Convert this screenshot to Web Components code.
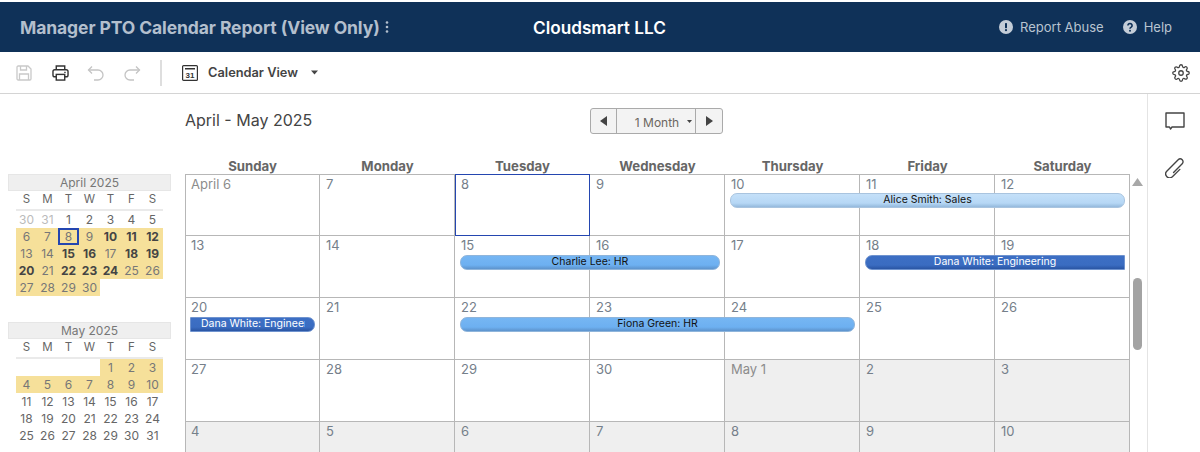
<!DOCTYPE html>
<html lang="en">
<head>
<meta charset="utf-8">
<title>Manager PTO Calendar Report</title>
<style>
  html, body { margin: 0; height: 100%; overflow: hidden; background: #fff; }
  body { font-family: Inter, "Liberation Sans", sans-serif; color: #444; }
</style>
</head>
<body>
<pto-app></pto-app>
<script>
// Barre du haut : titre du rapport, société, liens
class AppHeader extends HTMLElement {
  constructor() {
    super();
    this.attachShadow({ mode: 'open' });
    this.shadowRoot.innerHTML = `
      <style>
        :host { display: block; margin-top: 2px; height: 50px; background: #0f3158; }
        .bar { display: grid; grid-template-columns: 533px 1fr auto; align-items: center; height: 100%; }
        .title { display: flex; align-items: center; padding-left: 20px; font: 700 17.5px Inter, sans-serif; letter-spacing: -.1px; color: #b3bfcd; white-space: nowrap; }
        .title svg { margin-left: 5px; }
        .company { font: 600 17.2px Inter, sans-serif; color: #fff; }
        .links { display: flex; align-items: center; padding-right: 28px; font-size: 13px; color: #b9c4d1; }
        .links span { display: flex; align-items: center; gap: 7px; }
        .links span + span { margin-left: 19px; }
      </style>
      <div class="bar">
        <div class="title">Manager PTO Calendar Report (View Only)
          <svg width="4" height="14" viewBox="0 0 4 14" fill="#b3bfcd"><circle cx="2" cy="2.500" r="1.300"/><circle cx="2" cy="7" r="1.300"/><circle cx="2" cy="11.500" r="1.300"/></svg>
        </div>
        <div class="company">Cloudsmart LLC</div>
        <div class="links">
          <span>
            <svg width="14" height="14" viewBox="0 0 14 14"><circle cx="7" cy="7" r="7" fill="#c4cdd8"/><rect x="6" y="3" width="2" height="5.200" rx=".6" fill="#0f3158"/><circle cx="7" cy="10.200" r="1.100" fill="#0f3158"/></svg>
            Report Abuse
          </span>
          <span>
            <svg width="14" height="14" viewBox="0 0 14 14"><circle cx="7" cy="7" r="7" fill="#c4cdd8"/><path d="M4.900 5.400a2.100 2 0 1 1 3.300 1.700c-.8.5-1.200.9-1.200 1.600" fill="none" stroke="#0f3158" stroke-width="1.600"/><circle cx="7" cy="10.800" r="1" fill="#0f3158"/></svg>
            Help
          </span>
        </div>
      </div>`;
  }
}

// Barre d'outils sous l'en-tête
class ToolBar extends HTMLElement {
  constructor() {
    super();
    this.attachShadow({ mode: 'open' });
    this.shadowRoot.innerHTML = `
      <style>
        :host { display: block; height: 41px; border-bottom: 1px solid #d4d4d4; }
        .bar { display: flex; align-items: center; height: 100%; padding-left: 16px; padding-right: 10px; }
        svg { display: block; flex: none; }
        .sep { width: 2px; height: 26px; background: #dedede; margin: 0 20px 0 19px; }
        .label { margin-left: 10px; font-size: 12.8px; font-weight: 600; color: #444; }
        .end { margin-left: auto; }
      </style>
      <div class="bar">
        <svg width="16" height="16" viewBox="0 0 16 16" fill="none" stroke="#c9c9c9" stroke-width="1.300"><path d="M1 2.200C1 1.500 1.500 1 2.200 1H12l3 3v9.800c0 .7-.5 1.200-1.200 1.200H2.200C1.500 15 1 14.500 1 13.800z"/><path d="M4.500 1v4h6V1M3.500 15V9h9v6"/></svg>
        <svg width="17" height="16" viewBox="0 0 18 17" style="margin-left:20px" fill="none" stroke="#333" stroke-width="1.500"><path d="M4.500 5V1h9v4"/><rect x="1" y="5" width="16" height="7.500" rx="2"/><rect x="4.500" y="10" width="9" height="6" fill="#fff"/><path d="M13 7.800h1.500"/></svg>
        <svg width="18" height="16" viewBox="0 0 18 16" style="margin-left:18px" fill="none" stroke="#c4c4c4" stroke-width="1.300"><path d="M5 1.500 1.500 5 5 8.500"/><path d="M1.500 5H11a5 5 0 0 1 0 10H7"/></svg>
        <svg width="18" height="16" viewBox="0 0 18 16" style="margin-left:18px" fill="none" stroke="#c4c4c4" stroke-width="1.300"><path d="M13 1.500 16.500 5 13 8.500"/><path d="M16.500 5H7a5 5 0 0 0 0 10h4"/></svg>
        <div class="sep"></div>
        <svg width="16" height="16" viewBox="0 0 16 16"><rect x=".6" y=".6" width="14.800" height="14.800" rx="1" fill="none" stroke="#333" stroke-width="1.200"/><rect x="3" y="3" width="10" height="1.500" fill="#333"/><text x="8" y="13" text-anchor="middle" font-family="Liberation Sans" font-size="8" font-weight="700" fill="#333">31</text></svg>
        <span class="label">Calendar View</span>
        <svg width="7" height="5" viewBox="0 0 7 5" style="margin-left:13px"><path d="M0 .5h7L3.500 4.500z" fill="#444"/></svg>
        <svg class="end" width="18" height="18" viewBox="0 0 24 24" fill="none" stroke="#444" stroke-width="1.700" stroke-linejoin="round"><circle cx="12" cy="12" r="3"/><path d="M19.400 15a1.650 1.650 0 0 0 .33 1.820l.06.06a2 2 0 0 1 0 2.830 2 2 0 0 1-2.830 0l-.06-.06a1.650 1.650 0 0 0-1.820-.33 1.650 1.650 0 0 0-1 1.510V21a2 2 0 0 1-2 2 2 2 0 0 1-2-2v-.09A1.650 1.650 0 0 0 9 19.400a1.650 1.650 0 0 0-1.820.33l-.06.06a2 2 0 0 1-2.830 0 2 2 0 0 1 0-2.830l.06-.06a1.650 1.650 0 0 0 .33-1.820 1.650 1.650 0 0 0-1.510-1H3a2 2 0 0 1-2-2 2 2 0 0 1 2-2h.09A1.650 1.650 0 0 0 4.600 9a1.650 1.650 0 0 0-.33-1.820l-.06-.06a2 2 0 0 1 0-2.830 2 2 0 0 1 2.830 0l.06.06a1.650 1.650 0 0 0 1.820.33H9a1.650 1.650 0 0 0 1-1.510V3a2 2 0 0 1 2-2 2 2 0 0 1 2 2v.09a1.650 1.650 0 0 0 1 1.510 1.650 1.650 0 0 0 1.820-.33l.06-.06a2 2 0 0 1 2.830 0 2 2 0 0 1 0 2.830l-.06.06a1.650 1.650 0 0 0-.33 1.820V9a1.650 1.650 0 0 0 1.510 1H21a2 2 0 0 1 2 2 2 2 0 0 1-2 2h-.09a1.650 1.650 0 0 0-1.510 1z"/></svg>
      </div>`;
  }
}

// Petit calendrier de la colonne de gauche
class MiniCal extends HTMLElement {
  connectedCallback() {
    if (this.shadowRoot) return;
    this.attachShadow({ mode: 'open' });
    const first = Number(this.getAttribute('first'));      // premier numéro affiché
    const prevEnd = Number(this.getAttribute('prev-end')); // dernier jour du mois précédent
    const lead = Number(this.getAttribute('lead'));        // cases avant le 1er
    const len = Number(this.getAttribute('len'));
    const off = (this.getAttribute('off') || '').split(',').filter(Boolean).map(Number);
    const busy = (this.getAttribute('busy') || '').split(',').filter(Boolean).map(Number);
    const bold = (this.getAttribute('bold') || '').split(',').filter(Boolean).map(Number);
    const today = Number(this.getAttribute('today') || 0);
    const letters = ['S','M','T','W','T','F','S'].map(l => `<div class="dow">${l}</div>`).join('');
    let cells = '';
    for (let i = 0; i < lead; i++) {
      const shown = off.length ? `<div class="d muted">${prevEnd - lead + 1 + i}</div>` : '<div class="d"></div>';
      cells += shown;
    }
    for (let d = first; d <= len; d++) {
      const cls = ['d'];
      if (busy.includes(d)) cls.push('busy');
      if (bold.includes(d)) cls.push('bold');
      if (d === today) cls.push('today');
      cells += `<div class="${cls.join(' ')}">${d}</div>`;
    }
    this.shadowRoot.innerHTML = `
      <style>
        :host { display: block; width: 163px; font-size: 12px; color: #666; }
        .head { height: 15px; line-height: 15px; border: 1px solid #e6e6e6; background: #efefef; text-align: center; font-size: 12px; color: #777; }
        .grid { display: grid; grid-template-columns: repeat(7, 21px); margin: 0 8px; }
        .dow { height: 18px; line-height: 17px; text-align: center; color: #666; font-size: 11.500px; }
        .rule { grid-column: 1 / -1; height: 2px; background: #eaeaea; }
        .d { height: 17px; line-height: 17px; text-align: center; box-sizing: border-box; }
        .muted { color: #bbb; }
        .busy { background: #f6e09a; color: #777; }
        .bold { font-weight: 700; color: #444; }
        .today { border: 2px solid #2446b0; line-height: 13px; }
      </style>
      <div class="head">${this.getAttribute('label')}</div>
      <div class="grid">${letters}<div class="rule"></div>${cells}</div>`;
  }
}

// En-tête au-dessus de la grille : plage de dates et navigation
class RangeNav extends HTMLElement {
  constructor() {
    super();
    this.attachShadow({ mode: 'open' });
    this.shadowRoot.innerHTML = `
      <style>
        :host { display: flex; align-items: center; height: 24px; }
        .range { width: 405px; font-size: 16px; color: #444; margin-top: -3px; }
        .nav { display: grid; grid-template-columns: 25px 80px 26px; height: 24px; border: 1px solid #aaa; border-radius: 3px; background: #f3f3f3; }
        .nav > div { display: flex; align-items: center; justify-content: center; }
        .mid { border-left: 1px solid #aaa; border-right: 1px solid #aaa; font-size: 12px; color: #6b6660; padding: 2px 0 0 15px; }
        .mid svg { margin-left: 8px; margin-top: -2px; }
      </style>
      <div class="range">April - May 2025</div>
      <div class="nav">
        <div><svg width="8" height="10" viewBox="0 0 8 10"><path d="M7 0v10L0 5z" fill="#444"/></svg></div>
        <div class="mid">1 Month<svg width="5" height="3" viewBox="0 0 5 3"><path d="M0 0h5L2.500 3z" fill="#444"/></svg></div>
        <div><svg width="8" height="10" viewBox="0 0 8 10"><path d="M1 0v10l7-5z" fill="#444"/></svg></div>
      </div>`;
  }
}

// Une semaine de la grande grille ; les congés sont posés dans la même grille
class WeekRow extends HTMLElement {
  constructor() {
    super();
    this.attachShadow({ mode: 'open' });
  }
  render(week) {
    const cells = week.days.map((d, i) => {
      const cls = ['cell'];
      if (d.off) cls.push('off');
      if (d.sel) cls.push('sel');
      if (d.named) cls.push('named');
      if (i === 0) cls.push('first');
      if (week.top) cls.push('top');
      return `<div class="${cls.join(' ')}" style="grid-column:${i + 1}">${d.n}</div>`;
    }).join('');
    const bars = (week.events || []).map(e =>
      `<div class="ev ${e.kind} ${e.shape || ''}" style="grid-column:${e.from} / span ${e.span}">
         <span>${e.text}</span></div>`).join('');
    this.shadowRoot.innerHTML = `
      <style>
        :host { display: block; }
        .row { display: grid; grid-template-columns: repeat(7, 135px); grid-template-rows: 62px; }
        .cell { grid-row: 1; box-sizing: border-box; border-right: 1px solid #b7b7b7; border-bottom: 1px solid #b7b7b7; padding: 1px 0 0 6px; font-size: 13px; line-height: 17px; color: #75808a; }
        .cell.top { border-top: 1px solid #b7b7b7; }
        .cell.first { border-left: 1px solid #b7b7b7; padding-left: 5px; }
        .cell.off { background: #efefef; }
        .cell.named { color: #8c8c8c; }
        .cell.sel { outline: 1px solid #2446b0; outline-offset: -1px; }
        .ev { grid-row: 1; align-self: start; margin: 19px 5px 0; height: 15px; box-sizing: border-box; border-radius: 7px; font-size: 10.500px; line-height: 11px; text-align: center; overflow: hidden; white-space: nowrap; }
        .light { background: linear-gradient(#c4e0f9, #b6d7f5 70%, #94b9dc); border: 1px solid #a9c4df; color: #111; }
        .mid { background: linear-gradient(#76b6f3, #6db0f1 70%, #5d93cc); border: 1px solid #8fb5db; color: #111; }
        .dark { background: linear-gradient(#3d6fc4, #3a6cc1 70%, #2a55a3); border: 1px solid #6f93cf; color: #fff; }
        .open-end { border-radius: 7px 0 0 7px; }
        .open-start { border-radius: 0 7px 7px 0; text-align: left; padding-left: 10px; padding-right: 9px; }
        .open-start span { display: block; overflow: hidden; }
      </style>
      <div class="row">${cells}${bars}</div>`;
  }
}

// Grille du mois : jours de la semaine puis les semaines
class MonthGrid extends HTMLElement {
  connectedCallback() {
    if (this.shadowRoot) return;
    this.attachShadow({ mode: 'open' });
    const names = ['Sunday','Monday','Tuesday','Wednesday','Thursday','Friday','Saturday'];
    this.shadowRoot.innerHTML = `
      <style>
        :host { display: block; width: 945px; }
        .dows { display: grid; grid-template-columns: repeat(7, 135px); height: 17px; }
        .dows div { text-align: center; font: 700 13.2px/18px Inter, sans-serif; color: #666; }
      </style>
      <div class="dows">${names.map(n => `<div>${n}</div>`).join('')}</div>
      <div id="weeks"></div>`;
    const seq = (start, len, opts) => Array.from({ length: len }, (_, i) => ({ n: start + i, ...opts }));
    const weeks = [
      { top: true, days: [{ n: 'April 6', named: true }, ...seq(7, 1), { n: 8, sel: true }, ...seq(9, 4)],
        events: [{ from: 5, span: 3, kind: 'light', text: 'Alice Smith: Sales' }] },
      { days: seq(13, 7),
        events: [{ from: 3, span: 2, kind: 'mid', text: 'Charlie Lee: HR' },
                 { from: 6, span: 2, kind: 'dark', shape: 'open-end', text: 'Dana White: Engineering' }] },
      { days: seq(20, 7),
        events: [{ from: 1, span: 1, kind: 'dark', shape: 'open-start', text: 'Dana White: Engineering' },
                 { from: 3, span: 3, kind: 'mid', text: 'Fiona Green: HR' }] },
      { days: [...seq(27, 4), { n: 'May 1', off: true, named: true }, ...seq(2, 2, { off: true })] },
      { days: seq(4, 7, { off: true }) }
    ];
    const holder = this.shadowRoot.querySelector('#weeks');
    weeks.forEach(w => {
      const row = document.createElement('week-row');
      holder.appendChild(row);
      row.render(w);
    });
  }
}

// Colonne de droite : commentaires, pièces jointes
class SideRail extends HTMLElement {
  constructor() {
    super();
    this.attachShadow({ mode: 'open' });
    this.shadowRoot.innerHTML = `
      <style>
        :host { display: flex; flex-direction: column; align-items: center; width: 52px; border-left: 1px solid #e4e4e4; padding-top: 18px; gap: 28px; }
        svg { display: block; margin-left: 1px; }
      </style>
      <svg width="20" height="18" viewBox="0 0 20 18" fill="none" stroke="#444" stroke-width="1.400" stroke-linejoin="round"><path d="M1 1h18v14H7L5.500 17 4.500 15H1z"/></svg>
      <svg width="20" height="20" viewBox="1 1 17.500 17.500" fill="none" stroke="#444" stroke-width="1.200" stroke-linecap="round" stroke-linejoin="round"><path d="M14 10.940 7.470 17.470A3.500 3.500 0 0 1 2.530 12.530L12.530 2.530A2.500 2.500 0 0 1 16.070 6.070L8.500 13.640"/></svg>`;
  }
}

// Faux ascenseur à droite de la grille
class ScrollTrack extends HTMLElement {
  constructor() {
    super();
    this.attachShadow({ mode: 'open' });
    this.shadowRoot.innerHTML = `
      <style>
        :host { display: block; width: 17px; padding-top: 84px; box-sizing: content-box; }
        svg { display: block; margin-left: 2px; }
        .thumb { width: 9px; height: 72px; margin: 92px 0 0 3px; border-radius: 5px; background: #a3a3a3; }
      </style>
      <svg width="11" height="8" viewBox="0 0 11 8"><path d="M5.500 0 11 8H0z" fill="#a8a8a8"/></svg>
      <div class="thumb"></div>`;
  }
}

// Assemblage de la page
class PtoApp extends HTMLElement {
  constructor() {
    super();
    this.attachShadow({ mode: 'open' });
    this.shadowRoot.innerHTML = `
      <style>
        :host { display: block; height: 452px; overflow: hidden; }
        .body { display: flex; height: 358px; overflow: hidden; }
        .left { width: 177px; padding: 80px 0 0 8px; flex: none; }
        .left mini-cal + mini-cal { margin-top: 26px; }
        .center { flex: none; width: 945px; padding-top: 15px; }
        month-grid { margin-top: 24px; }
      </style>
      <app-header></app-header>
      <tool-bar></tool-bar>
      <div class="body">
        <div class="left">
          <mini-cal label="April 2025" lead="2" prev-end="31" first="1" len="30" off="1" today="8"
            busy="6,7,8,9,10,11,12,13,14,15,16,17,18,19,20,21,22,23,24,25,26,27,28,29,30"
            bold="10,11,12,15,16,18,19,20,22,23,24"></mini-cal>
          <mini-cal label="May 2025" lead="4" first="1" len="31" busy="1,2,3,4,5,6,7,8,9,10"></mini-cal>
        </div>
        <div class="center">
          <range-nav></range-nav>
          <month-grid></month-grid>
        </div>
        <scroll-track></scroll-track>
        <side-rail></side-rail>
      </div>`;
  }
}

customElements.define('app-header', AppHeader);
customElements.define('tool-bar', ToolBar);
customElements.define('mini-cal', MiniCal);
customElements.define('range-nav', RangeNav);
customElements.define('week-row', WeekRow);
customElements.define('month-grid', MonthGrid);
customElements.define('side-rail', SideRail);
customElements.define('scroll-track', ScrollTrack);
customElements.define('pto-app', PtoApp);
</script>
</body>
</html>
